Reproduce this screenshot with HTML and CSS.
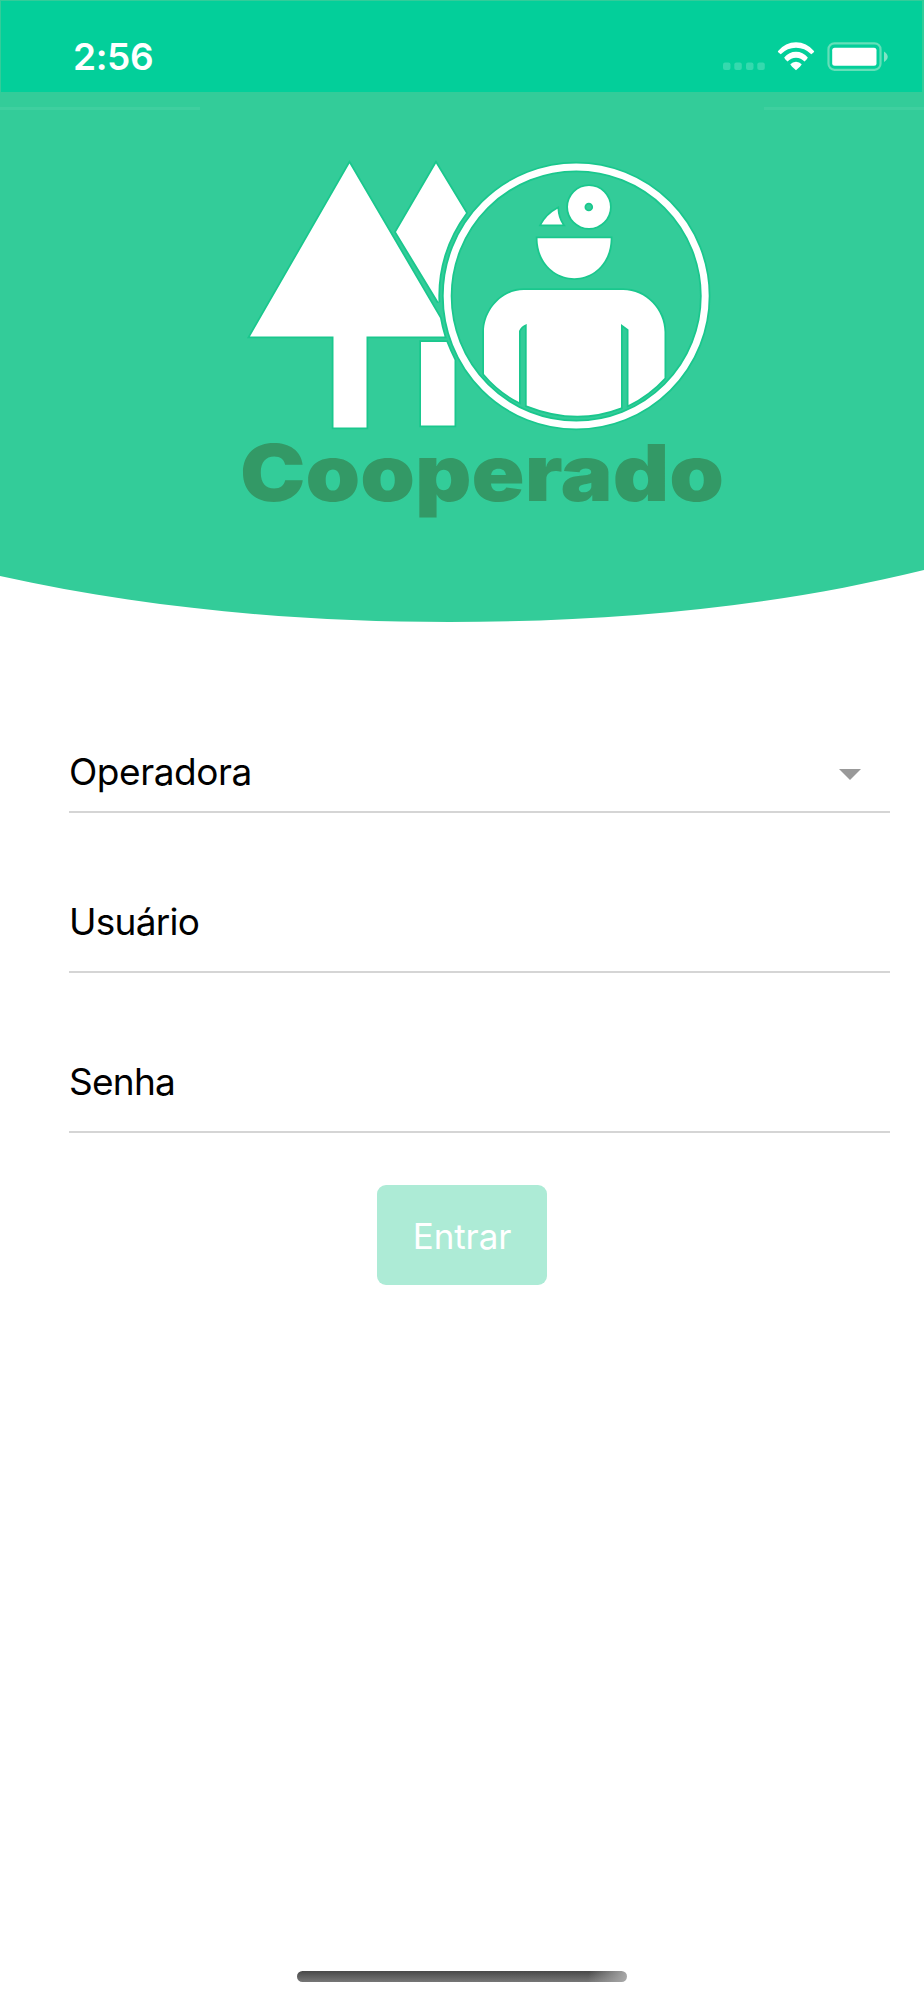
FILE: index.html
```html
<!DOCTYPE html>
<html lang="pt-BR">
<head>
<meta charset="utf-8">
<title>Cooperado</title>
<link rel="stylesheet" href="styles.css">
</head>
<body>
<main class="screen">
  <header class="hero">
    <div class="status">
      <span class="time">2:56</span>
      <svg class="indicators" width="170" height="32" viewBox="720 40 170 32">
        <g fill="#35d9ae"><rect x="723" y="62.5" width="7.5" height="7.5" rx="2"/><rect x="734.3" y="62.5" width="7.5" height="7.5" rx="2"/><rect x="746" y="62.5" width="7.5" height="7.5" rx="2"/><rect x="757.3" y="62.5" width="7.5" height="7.5" rx="2"/></g>
        <g fill="#fff"><path d="M777.8 51.2Q785.5 42.3 796 42.3T814.2 51.2Q814.4 52.4 811.3 54.2Q804.5 47.8 796 47.8T780.7 54.2Q777.6 52.4 777.8 51.2Z"/><path d="M784.2 57.5Q789 51.8 796 51.8T807.8 57.5Q807.5 59 804.5 61.5Q801 57.7 796 57.7T787.5 61.5Q784.5 59 784.2 57.5Z"/><path d="M790.3 64.2Q792.5 61.7 796 61.7T801.7 64.2Q801 66 796 70.3Q791 66 790.3 64.2Z"/></g>
        <rect x="828.5" y="43.3" width="52" height="26.5" rx="6" fill="none" stroke="#65dfb9" stroke-width="2.2"/>
        <rect x="832.2" y="47.8" width="44.3" height="17.9" rx="2.5" fill="#fff"/>
        <path d="M884 51.5Q887.7 54 887.7 56.8T884 62Z" fill="#80e4c5"/>
      </svg>
    </div>
    <div class="seams"><i class="seam seam-left"></i><i class="seam seam-right"></i></div>
    <svg class="logo" width="500" height="380" viewBox="230 150 500 380" role="img" aria-label="Cooperado">
      <g class="shape">
        <path d="M436 163.500L466 213A137.5 137.5 0 0 0 438.5 302L396 232Z"/>
        <path d="M421 342H446.5Q450 351 454.5 360V425.5H421Z"/>
        <path d="M349.5 163.500L440 318Q441.5 327 444.5 336.5H366.5V427.5H333.5V336.5H250Z"/>
        <path d="M541.500 224.500Q547 214.5 557.5 208.800Q558 218 562.500 224.500Z"/>
        <path fill-rule="evenodd" d="M568 207a21 21 0 1 0 42 0a21 21 0 1 0-42 0M584.5 207a4.3 4.3 0 1 0 8.6 0a4.3 4.3 0 1 0-8.6 0"/>
        <path d="M537.500 238.300H610.7C610.7 262 594 278.2 574.3 278.2S537.5 262 537.5 238.3Z"/>
        <path d="M524 290H623C646 290 664.5 310 664.5 332V378Q649 395 628.5 405V329.500L621 324V407.500Q576 425 526.700 405.500V324Q521 326 519 331V402Q499 392 484 374V332C484 310 502 290 524 290Z"/>
      </g>
      <circle class="ring-edge" cx="576.2" cy="296" r="129"/>
      <circle class="ring" cx="576.2" cy="296" r="129"/>
      <text class="wordmark" x="240" y="501" textLength="484" lengthAdjust="spacingAndGlyphs">Cooperado</text>
    </svg>
    <svg class="curve" width="924" height="60" viewBox="0 562 924 60"><path d="M0 562V576C150 609 300 622 449 622C610 622 770 608 924 570V562Z" fill="#33cc99"/></svg>
  </header>
  <form class="form">
    <label class="field select"><span class="op">Operadora</span><svg width="24" height="14" viewBox="0 0 24 14"><path d="M1 1H23L12 12Z" fill="#999"/></svg></label>
    <label class="field"><span class="us">Usuário</span></label>
    <label class="field"><span class="se">Senha</span></label>
    <button class="submit" type="button">Entrar</button>
  </form>
  <div class="home"></div>
</main>
</body>
</html>
```
FILE: styles.css
```css
* { box-sizing: border-box; }
body { margin: 0; background: #fff; font-family: Inter, "Liberation Sans", sans-serif; }
.screen { width: 924px; height: 2000px; display: flex; flex-direction: column; overflow: hidden; }
.hero { height: 622px; display: flex; flex-direction: column; align-items: center; background: linear-gradient(#33cc99 562px, #fff 562px); }
.status { width: 921px; height: 91px; margin: 1px 2px 0 1px; background: #03cf9a; display: flex; justify-content: space-between; padding: 39px 32px 0 72px; }
.time { color: #fff; font-size: 37px; line-height: 34px; font-weight: 600; letter-spacing: -0.4px; }
.indicators { flex: none; }
.seams { width: 100%; height: 58px; padding-top: 15px; display: flex; justify-content: space-between; }
.seam { height: 3px; background: #3fcf9f; }
.seam-left { width: 200px; }
.seam-right { width: 160px; }
.logo { flex: none; margin-left: 36px; }
.shape { fill: #fff; stroke: #1ac78d; stroke-width: 3.5px; paint-order: stroke; }
.ring { fill: none; stroke: #fff; stroke-width: 7px; }
.ring-edge { fill: none; stroke: #1ac78d; stroke-width: 10.5px; }
.wordmark { font-family: Inter, sans-serif; font-size: 78px; font-weight: 900; fill: #339966; }
.curve { display: block; margin-top: auto; flex: none; }
.form { width: 821px; margin: 0 0 0 69px; padding-top: 110px; display: flex; flex-direction: column; }
.field { height: 160px; border-bottom: 2px solid #d5d5d5; padding: 87px 0 0 0; display: flex; justify-content: space-between; font-size: 37px; line-height: 44px; color: #000; }
.select { height: 81px; padding: 18px 28px 0 0; }
.select svg { margin-top: 18px; }
.op { letter-spacing: -0.45px; }
.us { letter-spacing: -0.75px; }
.se { letter-spacing: -0.75px; }
.submit { width: 170px; height: 100px; margin: 52px 0 0 308px; padding: 1px 0 0; border: 0; border-radius: 9px; background: #adebd6; color: #fff; font: 400 35px/44px Inter, sans-serif; letter-spacing: -0.1px; }
.home { width: 330px; height: 11px; margin: auto auto 18px 297px; border-radius: 6px; background: linear-gradient(100deg, transparent 88%, #aaa 100%), linear-gradient(#484848, #777); }
```
